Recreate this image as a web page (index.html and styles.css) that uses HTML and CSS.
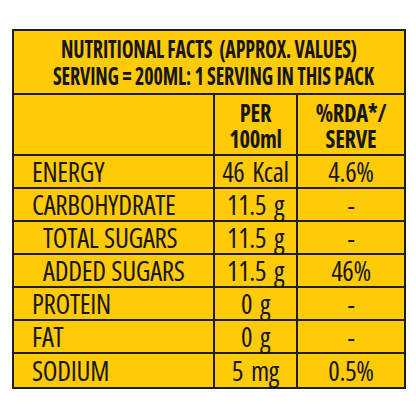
FILE: index.html
```html
<!DOCTYPE html>
<html lang="en">
<head>
  <meta charset="UTF-8" />
  <title>Nutritional Facts</title>
  <link rel="stylesheet" href="styles.css">
</head>
<body>
  <table class="facts">
    <colgroup>
      <col class="col-name">
      <col class="col-per">
      <col class="col-rda">
    </colgroup>
    <tr class="title-row">
      <th colspan="3">
        <span class="squeeze title">NUTRITIONAL FACTS&nbsp; (APPROX. VALUES)</span>
        <span class="squeeze title">SERVING = 200ML: 1 SERVING IN THIS PACK</span>
      </th>
    </tr>
    <tr class="head-row">
      <td></td>
      <th><span class="squeeze">PER</span><span class="squeeze">100ml</span></th>
      <th><span class="squeeze">%RDA*/</span><span class="squeeze">SERVE</span></th>
    </tr>
    <tr><td>ENERGY</td><td>46 Kcal</td><td>4.6%</td></tr>
    <tr><td>CARBOHYDRATE</td><td>11.5 g</td><td>-</td></tr>
    <tr><td class="sub">TOTAL SUGARS</td><td>11.5 g</td><td>-</td></tr>
    <tr><td class="sub">ADDED SUGARS</td><td>11.5 g</td><td>46%</td></tr>
    <tr><td>PROTEIN</td><td>0 g</td><td>-</td></tr>
    <tr><td>FAT</td><td>0 g</td><td>-</td></tr>
    <tr class="last"><td>SODIUM</td><td>5 mg</td><td>0.5%</td></tr>
  </table>
</body>
</html>
```
FILE: styles.css
```css
body {
  margin: 0;
  background: #ffffff;
  font-family: "Open Sans", sans-serif;
  font-stretch: 75%;
  color: #161616;
}
.facts {
  margin: 29px 0 0 12px;
  width: 392px;
  border-collapse: collapse;
  table-layout: fixed;
  background: #fecb06;
  border: 2px solid #1e1e1e;
}
.col-name { width: 201px; }
.col-per { width: 83px; }
.col-rda { width: 108px; }
.facts td, .facts th {
  border: 2px solid #1e1e1e;
  padding: 0;
  text-align: center;
  white-space: nowrap;
  font-size: 27px;
  font-weight: 380;
  line-height: 30px;
  height: 31px;
  letter-spacing: -0.3px;
  word-spacing: 3px;
}
.facts td:first-child {
  text-align: left;
  padding-left: 18px;
  word-spacing: 1px;
}
.facts td.sub {
  padding-left: 29px;
}
.squeeze {
  display: block;
  transform: scaleX(0.9);
}
.squeeze.title {
  transform: scaleX(0.8);
}
.title-row th {
  height: 62px;
  font-size: 25px;
  line-height: 27px;
  font-weight: 700;
  letter-spacing: -0.2px;
  word-spacing: 0;
}
.head-row th {
  height: 59px;
  font-size: 25px;
  line-height: 26px;
  font-weight: 700;
}
.last td {
  height: 33px;
}
```
